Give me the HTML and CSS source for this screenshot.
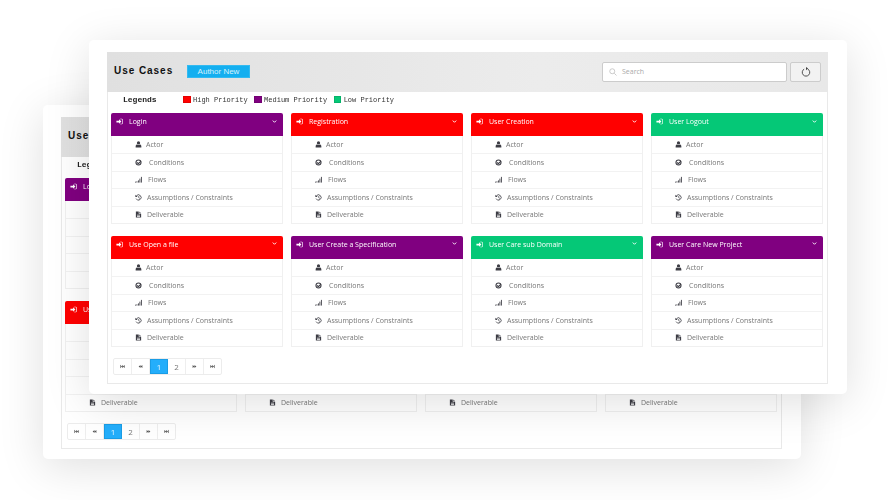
FILE: index.html
```html
<!DOCTYPE html>
<html lang="en">
<head>
<meta charset="utf-8">
<title>Use Cases</title>
<link rel="stylesheet" href="styles.css">
</head>
<body>
<svg class="defs" width="0" height="0" aria-hidden="true">
  <symbol id="i-signin" viewBox="0 0 16 16"><path d="M1 6h6V2.600L12.400 8 7 13.400V10H1z"/><path d="M9.500 1.500H13a2.500 2.500 0 0 1 2.500 2.500v8a2.500 2.500 0 0 1-2.500 2.500H9.500V13H13a1 1 0 0 0 1-1V4a1 1 0 0 0-1-1H9.500z"/></symbol>
  <symbol id="i-chev" viewBox="0 0 16 16"><path d="M2.500 5l5.500 5.500L13.500 5" fill="none" stroke="currentColor" stroke-width="3"/></symbol>
  <symbol id="i-user" viewBox="0 0 16 16"><circle cx="8" cy="4.500" r="3.700"/><path d="M1.500 15v-3c0-2.600 1.800-4 3.500-4 1 .9 2 1.300 3 1.300s2-.4 3-1.300c1.700 0 3.500 1.400 3.500 4v3z"/></symbol>
  <symbol id="i-check" viewBox="0 0 16 16"><path fill-rule="evenodd" d="M8 1a7 7 0 1 1 0 14A7 7 0 0 1 8 1zm0 2.400a4.600 4.600 0 1 0 0 9.200 4.600 4.600 0 0 0 0-9.200z"/><path d="M4.500 7.500l3.200 3.200 6-6" fill="none" stroke="currentColor" stroke-width="2.400"/></symbol>
  <symbol id="i-signal" viewBox="0 0 16 16"><rect x="0" y="13" width="2" height="2"/><rect x="3.400" y="12" width="2" height="3"/><rect x="6.800" y="10" width="2" height="5"/><rect x="10.200" y="6" width="2" height="9"/><rect x="13.600" y="2" width="2" height="13"/></symbol>
  <symbol id="i-history" viewBox="0 0 16 16"><path d="M3.200 4.200A6 6 0 1 1 2.500 10.500" fill="none" stroke="currentColor" stroke-width="1.900"/><path d="M.8 1.500l5.200 5.200H.8z"/><path d="M8.500 4.500V8.500l2.500 1.500" fill="none" stroke="currentColor" stroke-width="1.600"/></symbol>
  <symbol id="i-file" viewBox="0 0 16 16"><path fill-rule="evenodd" d="M2 1h6.500v5H14v9H2zm2.500 7.500V10h7V8.500zm0 3V13h7v-1.500z"/><path d="M10 1.200L13.800 5H10z"/></symbol>
  <symbol id="i-first" viewBox="0 0 16 16"><rect x="1" y="3" width="2" height="10"/><path d="M9 3v10L3 8zM15 3v10L9 8z"/></symbol>
  <symbol id="i-prev" viewBox="0 0 16 16"><path d="M8 3v10L2 8zM14 3v10L8 8z"/></symbol>
  <symbol id="i-next" viewBox="0 0 16 16"><path d="M2 3v10l6-5zM8 3v10l6-5z"/></symbol>
  <symbol id="i-last" viewBox="0 0 16 16"><rect x="13" y="3" width="2" height="10"/><path d="M1 3v10l6-5zM7 3v10l6-5z"/></symbol>
</svg>

<section class="window window-back">
  <div class="panel">
    <header class="top"><h1 class="title">Use Cases</h1><button class="author">Author New</button><div class="tools"><label class="search"><svg class="s-icon" viewBox="0 0 16 16"><circle cx="6.500" cy="6.500" r="5"/><path d="M10.500 10.500L15 15"/></svg><span>Search</span></label><button class="reload"><svg class="r-icon" viewBox="0 0 16 16"><path d="M5 3.400a6 6 0 1 0 6 0"/><path class="tip" d="M8 0v5l3.500-2.500z"/></svg></button></div></header>
    <div class="legend"><b>Legends</b><span class="key"><i class="swatch red"></i>High Priority</span><span class="key"><i class="swatch purple"></i>Medium Priority</span><span class="key"><i class="swatch green"></i>Low Priority</span></div>
    <div class="grid">
      <article class="card"><div class="head purple"><svg class="h-icon"><use href="#i-signin"/></svg><span>Login</span><svg class="chev"><use href="#i-chev"/></svg></div><ul class="rows"><li class="r1"><svg class="ic"><use href="#i-user"/></svg>Actor</li><li class="r2"><svg class="ic"><use href="#i-check"/></svg>Conditions</li><li class="r3"><svg class="ic"><use href="#i-signal"/></svg>Flows</li><li class="r4"><svg class="ic"><use href="#i-history"/></svg>Assumptions / Constraints</li><li class="r4"><svg class="ic"><use href="#i-file"/></svg>Deliverable</li></ul></article>
      <article class="card"><div class="head red"><svg class="h-icon"><use href="#i-signin"/></svg><span>Registration</span><svg class="chev"><use href="#i-chev"/></svg></div><ul class="rows"><li class="r1"><svg class="ic"><use href="#i-user"/></svg>Actor</li><li class="r2"><svg class="ic"><use href="#i-check"/></svg>Conditions</li><li class="r3"><svg class="ic"><use href="#i-signal"/></svg>Flows</li><li class="r4"><svg class="ic"><use href="#i-history"/></svg>Assumptions / Constraints</li><li class="r4"><svg class="ic"><use href="#i-file"/></svg>Deliverable</li></ul></article>
      <article class="card"><div class="head red"><svg class="h-icon"><use href="#i-signin"/></svg><span>User Creation</span><svg class="chev"><use href="#i-chev"/></svg></div><ul class="rows"><li class="r1"><svg class="ic"><use href="#i-user"/></svg>Actor</li><li class="r2"><svg class="ic"><use href="#i-check"/></svg>Conditions</li><li class="r3"><svg class="ic"><use href="#i-signal"/></svg>Flows</li><li class="r4"><svg class="ic"><use href="#i-history"/></svg>Assumptions / Constraints</li><li class="r4"><svg class="ic"><use href="#i-file"/></svg>Deliverable</li></ul></article>
      <article class="card"><div class="head green"><svg class="h-icon"><use href="#i-signin"/></svg><span>User Logout</span><svg class="chev"><use href="#i-chev"/></svg></div><ul class="rows"><li class="r1"><svg class="ic"><use href="#i-user"/></svg>Actor</li><li class="r2"><svg class="ic"><use href="#i-check"/></svg>Conditions</li><li class="r3"><svg class="ic"><use href="#i-signal"/></svg>Flows</li><li class="r4"><svg class="ic"><use href="#i-history"/></svg>Assumptions / Constraints</li><li class="r4"><svg class="ic"><use href="#i-file"/></svg>Deliverable</li></ul></article>
      <article class="card"><div class="head red"><svg class="h-icon"><use href="#i-signin"/></svg><span>Use Open a file</span><svg class="chev"><use href="#i-chev"/></svg></div><ul class="rows"><li class="r1"><svg class="ic"><use href="#i-user"/></svg>Actor</li><li class="r2"><svg class="ic"><use href="#i-check"/></svg>Conditions</li><li class="r3"><svg class="ic"><use href="#i-signal"/></svg>Flows</li><li class="r4"><svg class="ic"><use href="#i-history"/></svg>Assumptions / Constraints</li><li class="r4"><svg class="ic"><use href="#i-file"/></svg>Deliverable</li></ul></article>
      <article class="card"><div class="head purple"><svg class="h-icon"><use href="#i-signin"/></svg><span>User Create a Specification</span><svg class="chev"><use href="#i-chev"/></svg></div><ul class="rows"><li class="r1"><svg class="ic"><use href="#i-user"/></svg>Actor</li><li class="r2"><svg class="ic"><use href="#i-check"/></svg>Conditions</li><li class="r3"><svg class="ic"><use href="#i-signal"/></svg>Flows</li><li class="r4"><svg class="ic"><use href="#i-history"/></svg>Assumptions / Constraints</li><li class="r4"><svg class="ic"><use href="#i-file"/></svg>Deliverable</li></ul></article>
      <article class="card"><div class="head green"><svg class="h-icon"><use href="#i-signin"/></svg><span>User Care sub Domain</span><svg class="chev"><use href="#i-chev"/></svg></div><ul class="rows"><li class="r1"><svg class="ic"><use href="#i-user"/></svg>Actor</li><li class="r2"><svg class="ic"><use href="#i-check"/></svg>Conditions</li><li class="r3"><svg class="ic"><use href="#i-signal"/></svg>Flows</li><li class="r4"><svg class="ic"><use href="#i-history"/></svg>Assumptions / Constraints</li><li class="r4"><svg class="ic"><use href="#i-file"/></svg>Deliverable</li></ul></article>
      <article class="card"><div class="head purple"><svg class="h-icon"><use href="#i-signin"/></svg><span>User Care New Project</span><svg class="chev"><use href="#i-chev"/></svg></div><ul class="rows"><li class="r1"><svg class="ic"><use href="#i-user"/></svg>Actor</li><li class="r2"><svg class="ic"><use href="#i-check"/></svg>Conditions</li><li class="r3"><svg class="ic"><use href="#i-signal"/></svg>Flows</li><li class="r4"><svg class="ic"><use href="#i-history"/></svg>Assumptions / Constraints</li><li class="r4"><svg class="ic"><use href="#i-file"/></svg>Deliverable</li></ul></article>
    </div>
    <nav class="pager"><a><svg class="p-icon"><use href="#i-first"/></svg></a><a><svg class="p-icon"><use href="#i-prev"/></svg></a><a class="on">1</a><a>2</a><a><svg class="p-icon"><use href="#i-next"/></svg></a><a><svg class="p-icon"><use href="#i-last"/></svg></a></nav>
  </div>
</section>

<section class="window window-front">
  <div class="panel">
    <header class="top"><h1 class="title">Use Cases</h1><button class="author">Author New</button><div class="tools"><label class="search"><svg class="s-icon" viewBox="0 0 16 16"><circle cx="6.500" cy="6.500" r="5"/><path d="M10.500 10.500L15 15"/></svg><span>Search</span></label><button class="reload"><svg class="r-icon" viewBox="0 0 16 16"><path d="M5 3.400a6 6 0 1 0 6 0"/><path class="tip" d="M8 0v5l3.500-2.500z"/></svg></button></div></header>
    <div class="legend"><b>Legends</b><span class="key"><i class="swatch red"></i>High Priority</span><span class="key"><i class="swatch purple"></i>Medium Priority</span><span class="key"><i class="swatch green"></i>Low Priority</span></div>
    <div class="grid">
      <article class="card"><div class="head purple"><svg class="h-icon"><use href="#i-signin"/></svg><span>Login</span><svg class="chev"><use href="#i-chev"/></svg></div><ul class="rows"><li class="r1"><svg class="ic"><use href="#i-user"/></svg>Actor</li><li class="r2"><svg class="ic"><use href="#i-check"/></svg>Conditions</li><li class="r3"><svg class="ic"><use href="#i-signal"/></svg>Flows</li><li class="r4"><svg class="ic"><use href="#i-history"/></svg>Assumptions / Constraints</li><li class="r4"><svg class="ic"><use href="#i-file"/></svg>Deliverable</li></ul></article>
      <article class="card"><div class="head red"><svg class="h-icon"><use href="#i-signin"/></svg><span>Registration</span><svg class="chev"><use href="#i-chev"/></svg></div><ul class="rows"><li class="r1"><svg class="ic"><use href="#i-user"/></svg>Actor</li><li class="r2"><svg class="ic"><use href="#i-check"/></svg>Conditions</li><li class="r3"><svg class="ic"><use href="#i-signal"/></svg>Flows</li><li class="r4"><svg class="ic"><use href="#i-history"/></svg>Assumptions / Constraints</li><li class="r4"><svg class="ic"><use href="#i-file"/></svg>Deliverable</li></ul></article>
      <article class="card"><div class="head red"><svg class="h-icon"><use href="#i-signin"/></svg><span>User Creation</span><svg class="chev"><use href="#i-chev"/></svg></div><ul class="rows"><li class="r1"><svg class="ic"><use href="#i-user"/></svg>Actor</li><li class="r2"><svg class="ic"><use href="#i-check"/></svg>Conditions</li><li class="r3"><svg class="ic"><use href="#i-signal"/></svg>Flows</li><li class="r4"><svg class="ic"><use href="#i-history"/></svg>Assumptions / Constraints</li><li class="r4"><svg class="ic"><use href="#i-file"/></svg>Deliverable</li></ul></article>
      <article class="card"><div class="head green"><svg class="h-icon"><use href="#i-signin"/></svg><span>User Logout</span><svg class="chev"><use href="#i-chev"/></svg></div><ul class="rows"><li class="r1"><svg class="ic"><use href="#i-user"/></svg>Actor</li><li class="r2"><svg class="ic"><use href="#i-check"/></svg>Conditions</li><li class="r3"><svg class="ic"><use href="#i-signal"/></svg>Flows</li><li class="r4"><svg class="ic"><use href="#i-history"/></svg>Assumptions / Constraints</li><li class="r4"><svg class="ic"><use href="#i-file"/></svg>Deliverable</li></ul></article>
      <article class="card"><div class="head red"><svg class="h-icon"><use href="#i-signin"/></svg><span>Use Open a file</span><svg class="chev"><use href="#i-chev"/></svg></div><ul class="rows"><li class="r1"><svg class="ic"><use href="#i-user"/></svg>Actor</li><li class="r2"><svg class="ic"><use href="#i-check"/></svg>Conditions</li><li class="r3"><svg class="ic"><use href="#i-signal"/></svg>Flows</li><li class="r4"><svg class="ic"><use href="#i-history"/></svg>Assumptions / Constraints</li><li class="r4"><svg class="ic"><use href="#i-file"/></svg>Deliverable</li></ul></article>
      <article class="card"><div class="head purple"><svg class="h-icon"><use href="#i-signin"/></svg><span>User Create a Specification</span><svg class="chev"><use href="#i-chev"/></svg></div><ul class="rows"><li class="r1"><svg class="ic"><use href="#i-user"/></svg>Actor</li><li class="r2"><svg class="ic"><use href="#i-check"/></svg>Conditions</li><li class="r3"><svg class="ic"><use href="#i-signal"/></svg>Flows</li><li class="r4"><svg class="ic"><use href="#i-history"/></svg>Assumptions / Constraints</li><li class="r4"><svg class="ic"><use href="#i-file"/></svg>Deliverable</li></ul></article>
      <article class="card"><div class="head green"><svg class="h-icon"><use href="#i-signin"/></svg><span>User Care sub Domain</span><svg class="chev"><use href="#i-chev"/></svg></div><ul class="rows"><li class="r1"><svg class="ic"><use href="#i-user"/></svg>Actor</li><li class="r2"><svg class="ic"><use href="#i-check"/></svg>Conditions</li><li class="r3"><svg class="ic"><use href="#i-signal"/></svg>Flows</li><li class="r4"><svg class="ic"><use href="#i-history"/></svg>Assumptions / Constraints</li><li class="r4"><svg class="ic"><use href="#i-file"/></svg>Deliverable</li></ul></article>
      <article class="card"><div class="head purple"><svg class="h-icon"><use href="#i-signin"/></svg><span>User Care New Project</span><svg class="chev"><use href="#i-chev"/></svg></div><ul class="rows"><li class="r1"><svg class="ic"><use href="#i-user"/></svg>Actor</li><li class="r2"><svg class="ic"><use href="#i-check"/></svg>Conditions</li><li class="r3"><svg class="ic"><use href="#i-signal"/></svg>Flows</li><li class="r4"><svg class="ic"><use href="#i-history"/></svg>Assumptions / Constraints</li><li class="r4"><svg class="ic"><use href="#i-file"/></svg>Deliverable</li></ul></article>
    </div>
    <nav class="pager"><a><svg class="p-icon"><use href="#i-first"/></svg></a><a><svg class="p-icon"><use href="#i-prev"/></svg></a><a class="on">1</a><a>2</a><a><svg class="p-icon"><use href="#i-next"/></svg></a><a><svg class="p-icon"><use href="#i-last"/></svg></a></nav>
  </div>
</section>
</body>
</html>
```
FILE: styles.css
```css
* { box-sizing: border-box; }
html, body { margin: 0; padding: 0; }
body {
  position: relative;
  width: 890px;
  height: 500px;
  overflow: hidden;
  background: #fff;
  font-family: "Open Sans", "Liberation Sans", sans-serif;
  color: #666;
}
.defs { position: absolute; }

/* two windows lying on a free canvas */
.window {
  position: absolute;
  width: 758px;
  height: 354px;
  padding: 12px 18px 0;
  background: #fff;
  border-radius: 5px;
  box-shadow: 0 8px 45px rgba(0, 0, 0, .13);
  filter: blur(.45px);
}
.window-back { left: 43px; top: 105px; padding-right: 19px; }
.window-front { left: 89px; top: 40px; }

.panel {
  height: 332px;
  width: 721px;
  border: 1px solid #e9e9e9;
  border-top: 0;
}
.top {
  display: flex;
  align-items: center;
  height: 40px;
  margin: 0 -1px;
  padding: 0 7px 1px;
  background: linear-gradient(90deg, #e0e0e0, #ececec 60%, #e8e8e8);
}
.title {
  margin: 0 0 2px;
  width: 73px;
  font: bold 10px "Liberation Sans", sans-serif;
  letter-spacing: .95px;
  color: #111;
}
.author {
  width: 63px;
  height: 13px;
  padding: 0;
  border: 1px solid #33baf0;
  background: #14aff0;
  color: #d5f1fc;
  font: 8px "Liberation Sans", sans-serif;
}
.tools { display: flex; gap: 3px; margin-left: auto; }
.search {
  display: flex;
  align-items: center;
  gap: 5px;
  width: 185px;
  height: 20px;
  padding-left: 6px;
  background: #fff;
  border: 1px solid #ccc;
  border-radius: 2px;
  color: #aaa;
  font-size: 7px;
}
.s-icon { width: 8px; height: 8px; fill: none; stroke: #bbb; stroke-width: 1.500; }
.reload {
  display: flex;
  align-items: center;
  justify-content: center;
  width: 31px;
  height: 20px;
  padding: 0;
  background: #f2f2f2;
  border: 1px solid #ccc;
  border-radius: 2px;
}
.r-icon { width: 10px; height: 10px; fill: none; stroke: #444; stroke-width: 1.500; }
.r-icon .tip { fill: #444; stroke: none; }

.legend {
  display: flex;
  align-items: center;
  height: 21px;
  padding: 0 0 6px 15px;
  font: 7px "Liberation Mono", monospace;
  color: #333;
}
.legend b { width: 60px; font-size: 8px; color: #222; }
.key { display: flex; align-items: center; gap: 2.500px; margin-right: 6.500px; }
.swatch { width: 7.500px; height: 7.500px; border: .5px solid rgba(0,0,0,.1); }
.red { background: #ff0000; }
.purple { background: #800080; }
.green { background: #05c877; }

.grid {
  display: grid;
  grid-template-columns: repeat(4, 172px);
  column-gap: 8px;
  row-gap: 12px;
  padding: 0 3px;
}
.card { min-width: 0; }
.head {
  display: flex;
  align-items: center;
  height: 23px;
  padding: 0 6px 6px 5px;
  border-radius: 2px 2px 0 0;
  color: #fff;
  font-size: 7px;
  font-weight: 400;
}
.h-icon { width: 7px; height: 7px; margin-right: 6px; fill: #fff; }
.chev { width: 5px; height: 5px; margin-left: auto; margin-bottom: 1px; color: #fff; }
.rows {
  margin: 0;
  padding: 0;
  list-style: none;
  border: 1px solid #f0f0f0;
  border-top: 0;
}
.rows li {
  display: flex;
  align-items: center;
  height: 17.400px;
  padding-left: 23px;
  border-top: 1px solid #f2f2f2;
  font-size: 7px;
  color: #777;
}
.rows li:first-child { border-top: 0; }
.ic { width: 7px; height: 7px; fill: #3c3c44; color: #3c3c44; }
.r1 .ic { margin-right: 4px; }
.r2 .ic { margin-right: 7px; }
.r3 .ic { margin-right: 6px; }
.r4 .ic { margin-right: 5px; }

.pager {
  display: inline-flex;
  margin: 11px 0 0 5px;
  border: 1px solid #ececec;
  border-radius: 2px;
}
.pager a {
  display: flex;
  align-items: center;
  justify-content: center;
  width: 18px;
  height: 15px;
  border-right: 1px solid #eee;
  font-size: 8px;
  color: #777;
}
.pager a:last-child { border-right: 0; width: 17px; }
.pager .on { background: #24aefb; border: 1px solid #1a9de6; color: #e8f7ff; }
.p-icon { width: 5px; height: 5px; fill: #555; }
```
